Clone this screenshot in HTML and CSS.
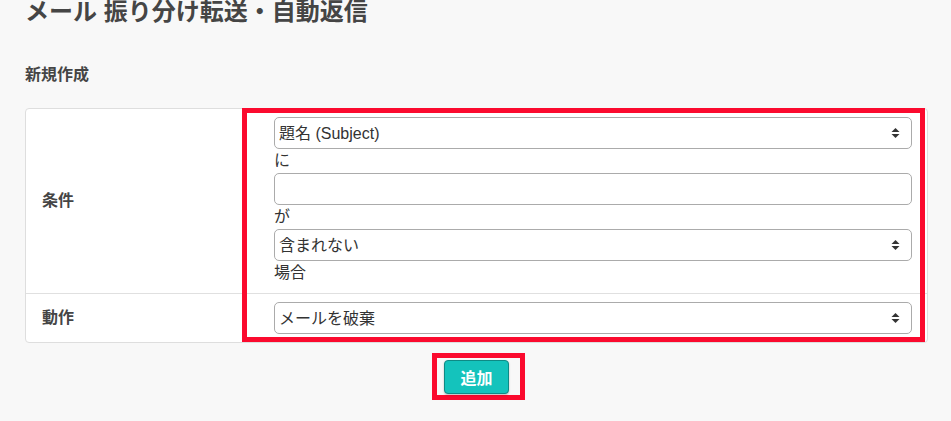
FILE: index.html
```html
<!DOCTYPE html>
<html lang="ja">
<head>
<meta charset="utf-8">
<title>メール 振り分け転送・自動返信</title>
<link rel="stylesheet" href="styles.css">
</head>
<body>
<div class="page">
  <h1 class="title">メール 振り分け転送・自動返信</h1>
  <h2 class="subtitle">新規作成</h2>
  <div class="card">
    <div class="row">
      <div class="label">条件</div>
      <div class="value">
        <div class="select-wrap">
          <select class="control"><option>題名 (Subject)</option></select>
          <svg class="arrows" width="9" height="10" viewBox="0 0 9 10"><path d="M0.5 4 L4.5 0 L8.5 4 Z M0.5 6 L4.5 10 L8.5 6 Z" fill="#333"/></svg>
        </div>
        <div class="text">に</div>
        <input class="control" type="text">
        <div class="text">が</div>
        <div class="select-wrap">
          <select class="control"><option>含まれない</option></select>
          <svg class="arrows" width="9" height="10" viewBox="0 0 9 10"><path d="M0.5 4 L4.5 0 L8.5 4 Z M0.5 6 L4.5 10 L8.5 6 Z" fill="#333"/></svg>
        </div>
        <div class="text">場合</div>
      </div>
    </div>
    <div class="row">
      <div class="label">動作</div>
      <div class="value">
        <div class="select-wrap">
          <select class="control"><option>メールを破棄</option></select>
          <svg class="arrows" width="9" height="10" viewBox="0 0 9 10"><path d="M0.5 4 L4.5 0 L8.5 4 Z M0.5 6 L4.5 10 L8.5 6 Z" fill="#333"/></svg>
        </div>
      </div>
    </div>
    <div class="mark"></div>
  </div>
  <div class="actions">
    <div class="btn-frame">
      <button class="btn" type="button">追加</button>
    </div>
  </div>
</div>
</body>
</html>
```
FILE: styles.css
```css
* { box-sizing: border-box; }
html, body {
  margin: 0;
  padding: 0;
  background: #f8f8f8;
}
body {
  font-family: "Liberation Sans", "Noto Sans CJK JP", sans-serif;
  color: #333;
  font-size: 16px;
  line-height: 24px;
}
.page {
  padding: 0 23px 0 25px;
}
.title {
  margin: 0;
  font-size: 24px;
  line-height: 24px;
  font-weight: bold;
  color: #454545;
}
.subtitle {
  margin: 39px 0 21px;
  font-size: 16px;
  line-height: 24px;
  font-weight: bold;
  color: #454545;
}
.card {
  position: relative;
  background: #fff;
  border: 1px solid #dedede;
  border-radius: 4px;
}
.row {
  display: grid;
  grid-template-columns: 233px 1fr;
}
.row + .row {
  border-top: 1px solid #e0e0e0;
}
.label {
  display: flex;
  align-items: center;
  padding-left: 16px;
  font-weight: bold;
  color: #454545;
}
.value {
  display: flex;
  flex-direction: column;
  padding: 8px 15px;
}
.text {
  height: 24px;
  line-height: 24px;
}
.select-wrap {
  position: relative;
}
.control {
  display: block;
  width: 100%;
  height: 32px;
  margin: 0;
  padding: 0 4px;
  border: 1px solid #ababab;
  border-radius: 5px;
  background: #fff;
  font-family: "Liberation Sans", "Noto Sans CJK JP", sans-serif;
  font-size: 16px;
  color: #333;
  -webkit-appearance: none;
  appearance: none;
  outline: none;
}
.arrows {
  position: absolute;
  right: 12px;
  top: 11px;
}
.actions {
  display: flex;
  justify-content: center;
  margin-top: 10px;
}
.btn-frame {
  margin-left: 4px;
  padding: 2px 11px 1px 7px;
  border: 5px solid #fb0a2e;
}
.btn {
  display: block;
  width: 65px;
  height: 34px;
  padding: 0;
  background: #14c3bc;
  border: 1px solid #0e8a85;
  border-radius: 4px;
  color: #fff;
  font-family: "Liberation Sans", "Noto Sans CJK JP", sans-serif;
  font-size: 16px;
  font-weight: bold;
  box-shadow: 0 1px 2px rgba(0, 0, 0, 0.25);
}
.mark {
  position: absolute;
  left: 216px;
  top: -1px;
  right: 2px;
  bottom: 0;
  border: 5px solid #fb0a2e;
  pointer-events: none;
}
```
